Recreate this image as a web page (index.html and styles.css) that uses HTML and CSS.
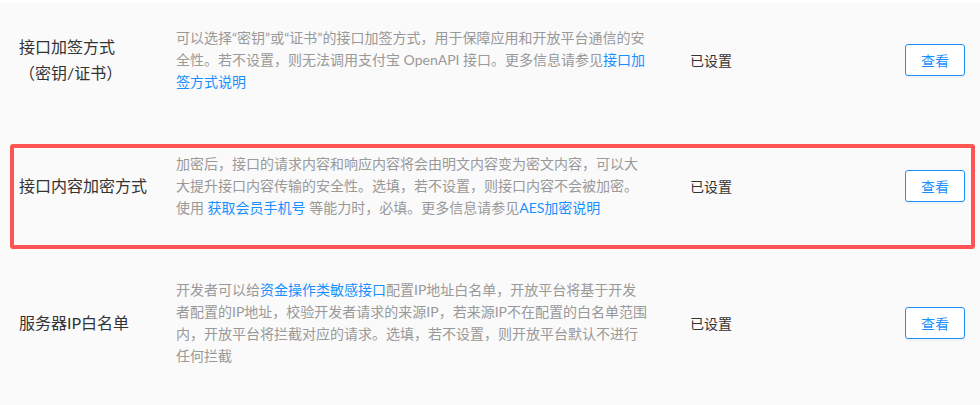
FILE: index.html
```html
<!DOCTYPE html>
<html lang="zh-CN">
<head>
    <meta charset="UTF-8">
    <meta name="viewport" content="width=device-width, initial-scale=1.0">
    <title>接口设置</title>
    <link rel="stylesheet" href="styles.css">
</head>
<body>
    <div class="setting-list">
        <div class="setting-row first">
            <div class="setting-title">接口加签方式<br>（密钥/证书）</div>
            <div class="setting-desc">可以选择“密钥”或“证书”的接口加签方式，用于保障应用和开放平台通信的安全性。若不设置，则无法调用支付宝 OpenAPI 接口。更多信息请参见<a href="#">接口加签方式说明</a></div>
            <div class="setting-status">已设置</div>
            <div class="setting-action"><button class="view-btn">查看</button></div>
        </div>

        <div class="setting-row highlight">
            <div class="setting-title">接口内容加密方式</div>
            <div class="setting-desc">加密后，接口的请求内容和响应内容将会由明文内容变为密文内容，可以大大提升接口内容传输的安全性。选填，若不设置，则接口内容不会被加密。使用 <a href="#">获取会员手机号</a> 等能力时，必填。更多信息请参见<a href="#">AES加密说明</a></div>
            <div class="setting-status">已设置</div>
            <div class="setting-action"><button class="view-btn">查看</button></div>
        </div>

        <div class="setting-row">
            <div class="setting-title">服务器IP白名单</div>
            <div class="setting-desc">开发者可以给<a href="#">资金操作类敏感接口</a>配置IP地址白名单，开放平台将基于开发者配置的IP地址，校验开发者请求的来源IP，若来源IP不在配置的白名单范围内，开放平台将拦截对应的请求。选填，若不设置，则开放平台默认不进行任何拦截</div>
            <div class="setting-status">已设置</div>
            <div class="setting-action"><button class="view-btn">查看</button></div>
        </div>
    </div>
</body>
</html>
```

FILE: styles.css
```css
body {
    font-family: Lato, "Noto Sans CJK SC", sans-serif;
    text-autospace: no-autospace;
    background-color: #fafafa;
    margin: 0;
    padding: 0;
}

.setting-list {
    border-top: 3px solid #fff;
}

.setting-row {
    display: flex;
    align-items: center;
    padding: 30px 15px 30px 19px;
}

.setting-row.first {
    padding-top: 24px;
}

/* red annotation frame round the second row */
.setting-row.highlight {
    position: relative;
}

.setting-row.highlight::after {
    content: "";
    position: absolute;
    top: 21px;
    bottom: 0;
    left: 10px;
    right: 5px;
    border: 4px solid #ff5454;
    border-radius: 3px;
}

.setting-title {
    width: 157px;
    flex-shrink: 0;
    font-size: 16px;
    line-height: 26px;
    color: #333;
}

.setting-desc {
    width: 472px;
    flex-shrink: 0;
    font-size: 14px;
    line-height: 22px;
    color: #999;
}

.setting-desc a {
    color: #1890ff;
    text-decoration: none;
}

.setting-status {
    flex: 1;
    padding-left: 42px;
    font-size: 14px;
    color: #333;
}

.view-btn {
    height: 32px;
    padding: 4px 15px;
    font-family: inherit;
    font-size: 14px;
    color: #1890ff;
    background-color: #fff;
    border: 1px solid #1890ff;
    border-radius: 3px;
    box-shadow: 0 2px 0 rgba(0, 0, 0, 0.03);
    cursor: pointer;
}
```
